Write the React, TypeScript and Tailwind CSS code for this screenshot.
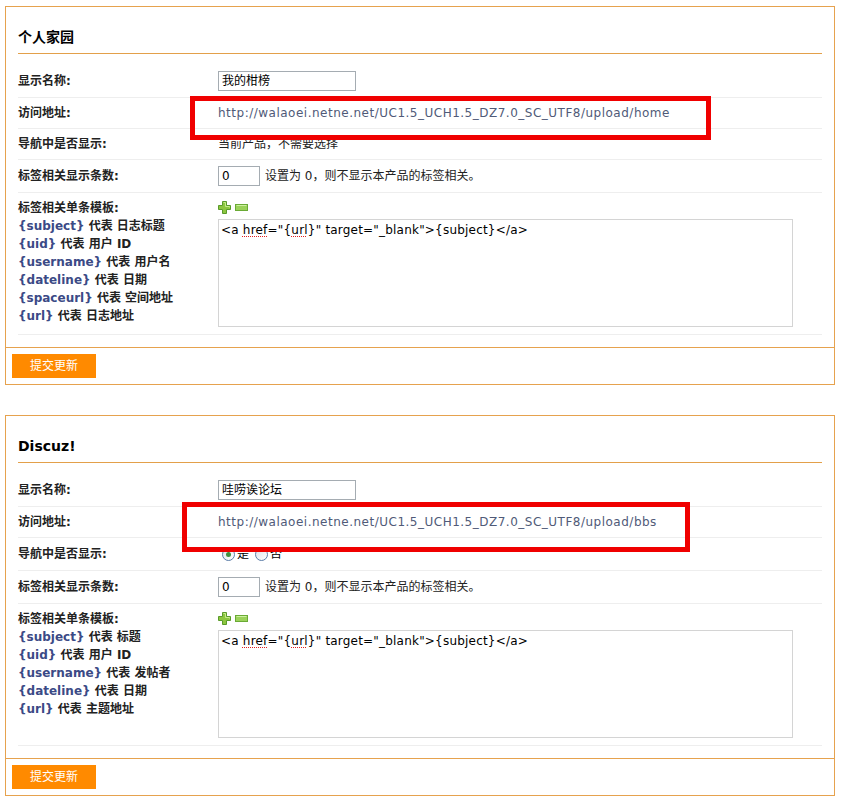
import type { ReactNode } from "react";

const font = { fontFamily: '"DejaVu Sans", "Noto Sans CJK SC", sans-serif' };

type Legend = { token: string; text: string };

const homeLegend: Legend[] = [
  { token: "{subject}", text: "代表 日志标题" },
  { token: "{uid}", text: "代表 用户 ID" },
  { token: "{username}", text: "代表 用户名" },
  { token: "{dateline}", text: "代表 日期" },
  { token: "{spaceurl}", text: "代表 空间地址" },
  { token: "{url}", text: "代表 日志地址" },
];

const bbsLegend: Legend[] = [
  { token: "{subject}", text: "代表 标题" },
  { token: "{uid}", text: "代表 用户 ID" },
  { token: "{username}", text: "代表 发帖者" },
  { token: "{dateline}", text: "代表 日期" },
  { token: "{url}", text: "代表 主题地址" },
];

function Row({
  label,
  children,
  className,
}: {
  label: string;
  children: ReactNode;
  className: string;
}) {
  return (
    <div className={`flex items-center border-b border-[#eeeeee] ${className}`}>
      <div className="w-[200px] shrink-0 font-bold text-[#222]">{label}</div>
      <div className="flex min-w-0 items-center">{children}</div>
    </div>
  );
}

function TextBox({ value, width }: { value: string; width: string }) {
  return (
    <div
      className={`${width} h-[20px] border border-[#a5acb2] bg-white px-[3px] leading-[18px] text-[#000]`}
    >
      {value}
    </div>
  );
}

function PlusMinus() {
  return (
    <div className="flex h-[13px] items-center gap-[4px]">
      <svg width="13" height="13" viewBox="0 0 13 13" aria-hidden="true">
        <path
          d="M4.5 0.5h4v4h4v4h-4v4h-4v-4h-4v-4h4z"
          fill="#8cc63f"
          stroke="#5a9a2a"
        />
        <path d="M5.5 1.5h2v4h4v1" fill="none" stroke="#c8ec8a" />
      </svg>
      <svg width="13" height="7" viewBox="0 0 13 7" aria-hidden="true">
        <rect x="0.5" y="0.5" width="12" height="6" fill="#9bd25a" stroke="#6aaa35" />
        <path d="M1.5 1.5h10" stroke="#cdf0a0" />
      </svg>
    </div>
  );
}

function Radio({ checked, label }: { checked: boolean; label: string }) {
  return (
    <span className="mr-[6px] flex items-center gap-[2px]">
      <span className="flex h-[13px] w-[13px] items-center justify-center rounded-full border border-[#5a7ca8] bg-gradient-to-br from-[#dce2ea] to-white">
        {checked && <span className="h-[5px] w-[5px] rounded-full bg-[#3f8f3f]" />}
      </span>
      <span className="text-[#000]">{label}</span>
    </span>
  );
}

function TemplateRow({ legend, className }: { legend: Legend[]; className: string }) {
  return (
    <div className={`flex border-b border-[#eeeeee] ${className}`}>
      <div className="w-[200px] shrink-0 pt-[6px] leading-[18px]">
        <div className="font-bold text-[#222]">标签相关单条模板:</div>
        {legend.map((item) => (
          <div key={item.token} className="font-bold">
            <span className="text-[#3b4a86]">{item.token}</span>{" "}
            <span className="text-[#222]">{item.text}</span>
          </div>
        ))}
      </div>
      <div className="pt-[8px]">
        <PlusMinus />
        <div
          role="textbox"
          className="mt-[5px] h-[108px] w-[575px] border border-[#d4d4d4] bg-white px-[2px] py-[1px] leading-[18px] tracking-[0.2px] text-[#000]"
        >
          &lt;a{" "}
          <span className="underline decoration-[#e02020] decoration-dotted underline-offset-2">
            href
          </span>
          ="{"{"}
          <span className="underline decoration-[#e02020] decoration-dotted underline-offset-2">
            url
          </span>
          {"}"}" target="_blank"&gt;{"{subject}"}&lt;/a&gt;
        </div>
      </div>
    </div>
  );
}

function Panel({
  title,
  name,
  url,
  nav,
  legend,
  navClass,
}: {
  title: string;
  name: string;
  url: string;
  nav: ReactNode;
  legend: Legend[];
  navClass: string;
}) {
  return (
    <section className="w-[830px] border border-[#e6a24e] bg-white">
      <div className="px-[12px] pb-[12px]">
        <h2 className="border-b border-[#e3a04a] pt-[22px] pb-[8px] text-[14px] leading-[16px] font-bold text-[#000]">
          {title}
        </h2>
        <div className="mt-[10px]">
          <Row label="显示名称:" className="h-[34px]">
            <TextBox value={name} width="w-[138px]" />
          </Row>
          <Row label="访问地址:" className="h-[31px]">
            <span className="tracking-[0.5px] text-[#505a78]">{url}</span>
          </Row>
          <Row label="导航中是否显示:" className={navClass}>
            {nav}
          </Row>
          <Row label="标签相关显示条数:" className="h-[33px]">
            <TextBox value="0" width="w-[42px]" />
            <span className="ml-[5px] text-[#222]">设置为 0，则不显示本产品的标签相关。</span>
          </Row>
          <TemplateRow legend={legend} className="h-[142px]" />
        </div>
      </div>
      <div className="border-t border-[#e6a24e] px-[6px] py-[6px]">
        <button
          type="button"
          className="h-[24px] w-[84px] bg-[#ff8a00] text-[12px] text-white"
          style={font}
        >
          提交更新
        </button>
      </div>
    </section>
  );
}

export default function App() {
  return (
    <div
      className="relative min-h-[803px] w-[843px] bg-white pt-[6px] pl-[5px] text-[12px]"
      style={font}
    >
      <Panel
        title="个人家园"
        name="我的柑榜"
        url="http://walaoei.netne.net/UC1.5_UCH1.5_DZ7.0_SC_UTF8/upload/home"
        nav={<span className="text-[#222]">当前产品，不需要选择</span>}
        legend={homeLegend}
        navClass="h-[31px]"
      />
      <div className="mt-[30px]">
        <Panel
          title="Discuz!"
          name="哇唠诶论坛"
          url="http://walaoei.netne.net/UC1.5_UCH1.5_DZ7.0_SC_UTF8/upload/bbs"
          nav={
            <div className="flex items-center pl-[4px]">
              <Radio checked label="是" />
              <Radio checked={false} label="否" />
            </div>
          }
          legend={bbsLegend}
          navClass="h-[33px]"
        />
      </div>

      {/* red annotation boxes over the url rows */}
      <div className="pointer-events-none absolute top-[96px] left-[190px] h-[44px] w-[521px] border-[5px] border-[#f00000]" />
      <div className="pointer-events-none absolute top-[502px] left-[182px] h-[50px] w-[508px] border-[5px] border-[#f00000]" />
    </div>
  );
}
